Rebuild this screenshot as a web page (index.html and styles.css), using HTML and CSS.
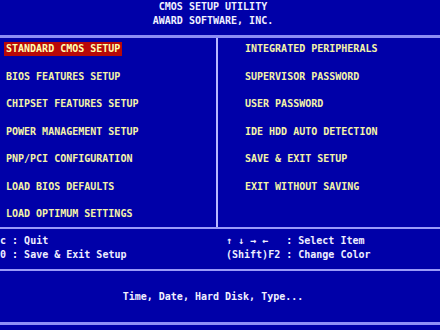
FILE: index.html
```html
<!DOCTYPE html>
<html lang="en">
<head>
    <meta charset="UTF-8">
    <meta name="viewport" content="width=device-width, initial-scale=1.0">
    <title>CMOS Setup Utility</title>
    <link rel="stylesheet" href="styles.css">
</head>
<body>

<div class="screen">
    <header class="title">
        <div>CMOS SETUP UTILITY</div>
        <div>AWARD SOFTWARE, INC.</div>
    </header>

    <div class="menu">
        <ul class="menu-col left">
            <li class="selected"><span>STANDARD CMOS SETUP</span></li>
            <li><span>BIOS FEATURES SETUP</span></li>
            <li><span>CHIPSET FEATURES SETUP</span></li>
            <li><span>POWER MANAGEMENT SETUP</span></li>
            <li><span>PNP/PCI CONFIGURATION</span></li>
            <li><span>LOAD BIOS DEFAULTS</span></li>
            <li><span>LOAD OPTIMUM SETTINGS</span></li>
        </ul>
        <ul class="menu-col right">
            <li><span>INTEGRATED PERIPHERALS</span></li>
            <li><span>SUPERVISOR PASSWORD</span></li>
            <li><span>USER PASSWORD</span></li>
            <li><span>IDE HDD AUTO DETECTION</span></li>
            <li><span>SAVE &amp; EXIT SETUP</span></li>
            <li><span>EXIT WITHOUT SAVING</span></li>
        </ul>
    </div>

    <div class="keys">
        <div class="keys-col left">
            <div class="key">Esc : Quit</div>
            <div class="key">F10 : Save &amp; Exit Setup</div>
        </div>
        <div class="keys-col right">
            <div class="key">&uarr; &darr; &rarr; &larr;   : Select Item</div>
            <div class="key">(Shift)F2 : Change Color</div>
        </div>
    </div>

    <div class="help">Time, Date, Hard Disk, Type...</div>
</div>

</body>
</html>
```

FILE: styles.css
```css
/* Award BIOS look */
html, body {
    margin: 0;
    padding: 0;
    background-color: #0000a8;
}
body {
    width: 440px;
    height: 330px;
    overflow: hidden;
    font-family: "DejaVu Sans Mono", "Liberation Mono", monospace;
    font-size: 10px;
    font-weight: bold;
    line-height: 14px;
    color: #eeeeff;
}
.screen {
    width: 440px;
}
.title {
    height: 35px;
    text-align: center;
    padding-right: 14px;
    box-sizing: border-box;
    color: #f0f0ff;
}
.menu {
    display: flex;
    height: 189px;
    border-top: 3px solid #8c8cf4;
    border-bottom: 2px solid #9a9af8;
}
.menu-col {
    list-style: none;
    margin: 0;
    padding: 4px 0 0 0;
    display: flex;
    flex-direction: column;
    gap: 13.5px;
}
.menu-col.left {
    width: 218px;
    padding-left: 4px;
    box-sizing: border-box;
    border-right: 2px solid #b8b8ff;
}
.menu-col.right {
    padding-left: 25px;
}
.menu-col span {
    display: inline-block;
    padding: 0 2px;
    color: #f4f4a8;
    white-space: pre;
}
.menu-col .selected span {
    background-color: #b80808;
    color: #ffffb0;
}
.keys {
    display: flex;
    height: 42px;
    padding-top: 5px;
    box-sizing: border-box;
    border-bottom: 2px solid #9a9af8;
}
.key {
    white-space: pre;
}
.keys-col.left {
    width: 238px;
    margin-left: -12px;
}
.help {
    height: 51px;
    line-height: 51px;
    text-align: center;
    padding-right: 14px;
    border-bottom: 3px solid #9090f6;
    color: #f0f0ff;
}
```
